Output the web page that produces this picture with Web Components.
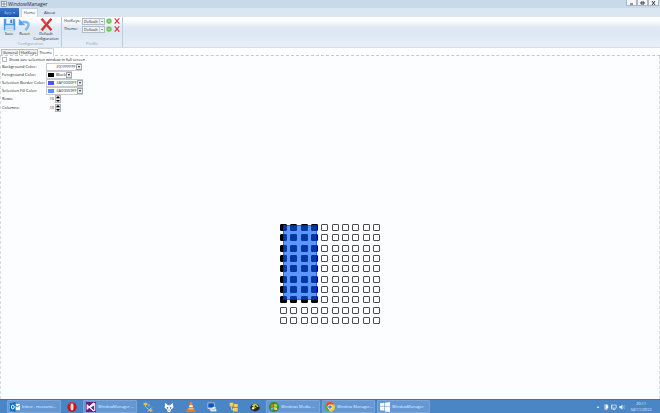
<!DOCTYPE html>
<html lang="en">
<head>
<meta charset="utf-8">
<title>WindowManager</title>
<style>
html,body{margin:0;height:100%}
body{font-family:"Open Sans","Noto Sans",sans-serif;font-size:4px;line-height:6px;color:#1c1c1c;overflow:hidden}
</style>
</head>
<body>
<window-manager></window-manager>
<script>
const define = (name, html, setup) => customElements.define(name, class extends HTMLElement {
  connectedCallback() {
    if (this.shadowRoot) return;
    const t = document.createElement('template');
    t.innerHTML = '<style>*{box-sizing:border-box}button,input,select{font:inherit;color:inherit;margin:0;padding:0;border:0;background:none;border-radius:0}svg{display:block}</style>' + html;
    this.attachShadow({mode: 'open'}).append(t.content.cloneNode(true));
    if (setup) setup(this, this.shadowRoot);
  }
});

const icons = {
  win: '<rect x="1" y="1" width="14" height="14" fill="#fff" stroke="#5c6f86" stroke-width="1.5"/><path d="M8 1v14M1 8h14" stroke="#5c6f86" stroke-width="2"/>',
  save: '<path d="M1 1h13l1 1v13H1z" fill="#4a9ae8"/><path d="M4 1h8v6H4z" fill="#e9f4ff"/><path d="M9 2h2v4H9z" fill="#3479c8"/><path d="M3 9h10v6H3z" fill="#dcecfb"/><path d="M4 11h8M4 13h8" stroke="#9bc1e7"/>',
  reset: '<path d="M4 5h4c7 0 6 5 1 10" fill="none" stroke="#7dbaf2" stroke-width="3"/><path d="M1 1v8h8z" fill="#5ba4ea"/>',
  cross: '<path d="M2 1l12 14M14 1L2 15" stroke="#d93030" stroke-width="3"/><path d="M3 2l5 5" stroke="#f27878" stroke-width="1"/>',
  plus: '<circle cx="8" cy="8" r="7" fill="#6cc455" stroke="#98d186"/><path d="M8 5v6M5 8h6" stroke="#b9eaa2" stroke-width="2"/>',
  outlook: '<path d="M7 3h9v10H7z" fill="#fff"/><path d="M7 4l5 4 4-4" fill="none" stroke="#1672bd" stroke-width="1.4"/><path d="M0 2l9-2v16l-9-2z" fill="#0872c6"/><ellipse cx="4.5" cy="8" rx="2.3" ry="3" fill="none" stroke="#fff" stroke-width="1.6"/>',
  opera: '<ellipse cx="8" cy="8" rx="7.5" ry="8" fill="#c01a1c"/><ellipse cx="8" cy="8" rx="2.4" ry="5.5" fill="#f6dede"/><path d="M3 4q3-4 8-2" stroke="#ef7770" fill="none"/>',
  vs: '<path d="M0 0h16v16H0z" fill="#68217a"/><path d="M2 5l3 3-3 3zM12 2l2 1v10l-2 1-6-5 6-4zM2 11l10-9M2 5l10 9" fill="none" stroke="#fff" stroke-width="1.7"/>',
  tools: '<path d="M4 3v5l8 6" fill="none" stroke="#d6b653" stroke-width="1.5"/><path d="M8 3h3v4H8z" fill="#74a9db"/><path d="M8 15l6-6" stroke="#dce8ee" stroke-width="1.5"/><path d="M1 1h6v4H1zM11 12h4v3h-4z" fill="#e5c04c"/>',
  foobar: '<path d="M2 1l4 4h4l4-4 1 8-4 3-1 4H6l-1-4-4-3z" fill="#fff"/><path d="M4 8l3 1-1 2zM12 8l-3 1 1 2z" fill="#202a35"/><path d="M7 13h2" stroke="#222"/>',
  vlc: '<path d="M7 0h2l4 13H3z" fill="#f38a1e"/><path d="M5.7 5h4.6l.8 3H4.9z" fill="#fff"/><path d="M2 11h12l2 5H0z" fill="#e67b16"/><path d="M4 11h8" stroke="#fff"/>',
  remote: '<path d="M1 1h11v10H1z" fill="#dbe7f6"/><path d="M2 2h9v7H2z" fill="#1450bd"/><path d="M4 12l5-3 6 2v4H6z" fill="#cfdceb"/><path d="M9 8h5v6H9z" fill="#e9f2fb"/><path d="M10 12l1 1 3-4" fill="none" stroke="#3d8a48"/>',
  folders: '<path d="M1 1h6v6H1zM8 3h6v5H8zM6 9h8v6H6z" fill="#f4c646"/><path d="M2 3h4M9 5h4M7 11h6" stroke="#fff1aa"/><path d="M4 7v5h2" stroke="#e6edf5" fill="none"/>',
  bug: '<ellipse cx="8" cy="9" rx="7.5" ry="6" fill="#242d28"/><path d="M3 6q5-7 11 1l-5 3z" fill="#dfc936"/><circle cx="5" cy="10" r="2" fill="#f5ef9a"/><path d="M8 6l5 5" stroke="#222" stroke-width="2"/>',
  media: '<circle cx="8" cy="8" r="8" fill="#368733"/><path d="M3 4l4-1v4l-4 1z" fill="#ec6b35"/><path d="M8 3l5 1v4l-5-1z" fill="#a7df5b"/><path d="M3 9l4-1v4l-4 1z" fill="#62b9ee"/><path d="M8 8l5 1v4l-5-1z" fill="#f6d847"/>',
  chrome: '<circle cx="8" cy="8" r="8" fill="#f5cd31"/><path d="M1 4a8 8 0 0 1 14 0H8L5 9z" fill="#dd4b39"/><path d="M1 4l5 8 2 4A8 8 0 0 1 1 4" fill="#3faa50"/><circle cx="8" cy="8" r="3.9" fill="#fff"/><circle cx="8" cy="8" r="2.9" fill="#4285d8"/>',
  panes: '<path d="M0 2l7-1v6H0zM8 1l8-1v7H8zM0 8h7v6l-7-1zM8 8h8v8l-8-1z" fill="#f7fbff"/>',
  up: '<path d="M4 10l4-4 4 4z" fill="#fff"/>',
  flag: '<path d="M3 1h9v14H3z" fill="#dbe7f4"/><path d="M7 4h7v7H7z" fill="#fff"/><path d="M5 1v14" stroke="#526b87" stroke-width="2"/>',
  net: '<path d="M2 3h12v8H2zM8 11v4M4 15h8" fill="none" stroke="#dce9f6" stroke-width="2"/><path d="M1 2v12" stroke="#fff" stroke-width="2"/>',
  sound: '<path d="M1 5h4l4-4v14l-4-4H1z" fill="#edf4fb"/><path d="M11 4q3 4 0 8M14 2q4 6 0 12" stroke="#c5d9ee" fill="none"/>'
};

define('wm-icon', '<style>:host{display:block;flex:none;width:var(--icon,12px);height:var(--icon,12px)}svg{width:100%;height:100%}</style><svg viewBox="0 0 16 16" aria-hidden="true"></svg>',
  (el, root) => root.querySelector('svg').innerHTML = icons[el.getAttribute('name')]);

define('title-bar', `<style>
:host{display:flex;align-items:center;height:8px;background:#c8d9ea;padding:0 1px;gap:1px;--icon:6px}
h1{font-size:5px;font-weight:400;line-height:8px;margin:0;flex:1;color:#26303b}
nav{display:flex;align-self:flex-start}
button{width:11px;height:6px;border:1px solid #aab6c3;border-top:0;background:#f5f6f7;display:grid;place-items:center}
svg{width:5px;height:4px;fill:none;stroke:#333}
</style><wm-icon name="win"></wm-icon><h1>WindowManager</h1><nav><button aria-label="Minimize"><svg viewBox="0 0 5 4"><path d="M1 3h3"/></svg></button><button aria-label="Restore"><svg viewBox="0 0 5 4"><path d="M1 1h3v2H1z"/></svg></button><button aria-label="Close"><svg viewBox="0 0 5 4"><path d="M1 0l3 4M4 0L1 4"/></svg></button></nav>`);

define('ribbon-tabs', `<style>
:host{display:flex;height:9px;background:#dbe6f3;line-height:9px;color:#26354a}
button{padding:0 6px}
.app{width:19px;padding:0;margin-right:2px;background:linear-gradient(#3f78ca,#1d55ad);color:#9fc0ee}
.on{background:#fafcff;border:1px solid #c2d2e5;border-bottom:0;padding:0 1px;line-height:8px;width:17px}
</style><button class="app">App ▾</button><button class="on">Home</button><button>About</button>`);

define('ribbon-group', `<style>
:host{display:flex;flex-direction:column;border-right:1px solid #bccbdd;padding:0 var(--pad,1px);height:30px}
div{display:flex;flex:1}footer{text-align:center;color:#8f9eb2;line-height:6px;height:6px}
</style><div><slot></slot></div><footer></footer>`, (el, root) => root.querySelector('footer').textContent = el.getAttribute('caption'));

define('tool-button', `<style>
:host{display:block;--icon:13px}
button{display:flex;flex-direction:column;align-items:center;line-height:5px;text-align:center;white-space:nowrap;padding-top:1px;width:100%}
</style><button><wm-icon name="save"></wm-icon><span><slot></slot></span></button>`, (el, root) => {
  const i = document.createElement('wm-icon'); i.setAttribute('name', el.getAttribute('icon'));
  root.querySelector('wm-icon').replaceWith(i);
});

define('profile-row', `<style>
:host{display:flex;align-items:center;gap:1px;height:8px;--icon:6px}
label{width:17px;white-space:nowrap}
.s{position:relative;width:23px;height:7px}
select{appearance:none;width:100%;height:7px;border:1px solid #b3bdca;background:#eef1f5;padding:0 1px;line-height:5px;display:block}
.s::after{content:"";position:absolute;right:2px;top:3px;border:1px solid transparent;border-top-color:#444}
.s::before{content:"";position:absolute;right:5px;top:1px;bottom:1px;border-left:1px solid #c5cdd8}
button+button{margin-left:1px}
</style><label for="p"></label><div class="s"><select id="p"><option>Default</option></select></div><button aria-label="Add"><wm-icon name="plus"></wm-icon></button><button aria-label="Delete"><wm-icon name="cross"></wm-icon></button>`,
  (el, root) => root.querySelector('label').textContent = el.getAttribute('label'));

define('app-ribbon', `<style>
:host{display:flex;height:31px;background:linear-gradient(#fff 0,#fff 3px,#e0eaf5 10px,#dce7f4 16px,#e8eff8 30px);border-bottom:1px solid #d2deec}
.save{width:16px}.reset{width:15px}.def{width:28px}
.profile{--pad:2px}
.rows{display:flex;flex-direction:column}
</style><ribbon-group caption="Configuration"><tool-button class="save" icon="save">Save</tool-button><tool-button class="reset" icon="reset">Reset</tool-button><tool-button class="def" icon="cross">Default<br>Configuration</tool-button></ribbon-group><ribbon-group class="profile" caption="Profile"><div class="rows"><profile-row label="HotKeys:"></profile-row><profile-row label="Theme:"></profile-row></div></ribbon-group>`);

define('page-tabs', `<style>
:host{display:flex;align-items:flex-end;height:8px;padding-left:1px;border-bottom:1px dashed #c6c8cc;background:#fff}
button{height:6px;line-height:5px;padding:0 1px;border:1px solid #b9bcc2;border-bottom:0;background:#eeeff1;white-space:nowrap}
button+button{border-left:0}
.on{height:8px;line-height:7px;background:#fff;margin-bottom:-1px;border-color:#d3d5d9}
</style><button>General</button><button>HotKeys</button><button class="on">Theme</button>`);

define('color-field', `<style>
:host{display:flex;align-items:center;height:8px}
label{width:44px;white-space:nowrap}
.s{position:relative;width:var(--w,37px);height:8px}
select{appearance:none;width:100%;height:8px;line-height:6px;padding-left:9px;border:1px solid #c6cbd3;background:#fff;display:block}
i{position:absolute;left:2px;top:2px;width:6px;height:4px;background:var(--c)}
b{position:absolute;right:0;top:1px;width:6px;height:6px;border:1px solid #a2a8b0;background:#eceef0;pointer-events:none}
b::after{content:"";position:absolute;left:1px;top:1px;border:1px solid transparent;border-top:2px solid #222;border-bottom:0}
</style><label for="c"></label><div class="s"><select id="c"><option></option></select><i></i><b></b></div>`, (el, root) => {
  root.querySelector('label').textContent = el.getAttribute('label');
  root.querySelector('option').textContent = el.getAttribute('value');
});

define('number-field', `<style>
:host{display:flex;align-items:center;height:8px}
label{width:45px}
input{width:7px;height:6px;text-align:right;line-height:6px}
span{display:flex;flex-direction:column;margin-left:1px}
button{width:6px;height:4px;background:#e9ebed;border:1px solid #b0b5bb;display:grid;place-items:center}
button+button{border-top:0}
svg{width:4px;height:2px}
</style><label for="n"></label><input id="n" value="10"><span><button aria-label="Increase"><svg viewBox="0 0 4 2"><path d="M0 2l2-2 2 2z"/></svg></button><button aria-label="Decrease"><svg viewBox="0 0 4 2"><path d="M0 0l2 2 2-2z"/></svg></button></span>`,
  (el, root) => root.querySelector('label').textContent = el.getAttribute('label'));

define('theme-form', `<style>
:host{display:flex;flex-direction:column;padding:0 1px}
.check{display:flex;align-items:center;gap:2px;height:7px}
input{appearance:none;width:5px;height:5px;border:1px solid #b9bec6;background:#fff}
.last{margin-top:1px}
</style><label class="check"><input type="checkbox">Show size selection window in full screen</label>
<color-field label="Background Color:" value="#01FFFFFF" style="--c:#fff;--w:36px"></color-field>
<color-field label="Foreground Color:" value="Black" style="--c:#000;--w:26px"></color-field>
<color-field label="Selection Border Color:" value="#AF0000FF" style="--c:#5050ff"></color-field>
<color-field label="Selection Fill Color:" value="#A00059FF" style="--c:#5c93ff"></color-field>
<number-field label="Rows:"></number-field><number-field class="last" label="Columns:"></number-field>`);

define('size-grid', `<style>
:host{display:grid;position:relative;grid-template-columns:repeat(10,7px);grid-template-rows:repeat(10,7px);justify-content:space-between;align-content:space-between;width:100px;height:100px}
i{border:1px solid #4c4c50;border-radius:1px;background:#fff}
i.on{background:#000;border-color:#000}
b{position:absolute;left:3px;top:1px;width:34px;height:75px;background:#0059ffa0;border:1px solid #0000ff60}
</style>`, (el, root) => {
  for (let n = 0; n < 100; n++) {
    const c = document.createElement('i');
    if (n % 10 < 4 && n < 80) c.className = 'on';
    root.append(c);
  }
  root.append(document.createElement('b'));
});

define('task-item', `<style>
:host{display:block;height:13px;--icon:10px}
button{width:100%;height:100%;display:flex;align-items:center;justify-content:center;overflow:hidden;white-space:nowrap;color:#e4eefa}
:host([open]) button{justify-content:flex-start;gap:2px;padding-left:2px;background:#6598d2;border:1px solid #78a6da;border-radius:1px}
</style><button><slot></slot></button>`, (el, root) => {
  const i = document.createElement('wm-icon'); i.setAttribute('name', el.getAttribute('icon'));
  root.querySelector('button').prepend(i);
  if (!el.textContent) root.querySelector('button').setAttribute('aria-label', el.getAttribute('icon'));
});

define('task-bar', `<style>
:host{display:flex;align-items:center;height:14px;background:#4a85c6;border-top:1px solid #3f73b0;padding-left:7px}
.w{width:54px}.i{width:22px}.n{width:53px;margin-left:2px}
.pins{display:grid;grid-template-columns:repeat(6,1fr);width:129px}
.tray{margin-left:auto;display:flex;align-items:center;gap:2px;padding-right:5px;color:#e9f2fc;--icon:6px}
time{display:block;text-align:center;line-height:6px;width:28px}
</style><task-item class="w" icon="outlook" open>Inbox - mezianto...</task-item><task-item class="i" icon="opera"></task-item><task-item class="w" icon="vs" open>WindowManager ...</task-item>
<div class="pins"><task-item icon="tools"></task-item><task-item icon="foobar"></task-item><task-item icon="vlc"></task-item><task-item icon="remote"></task-item><task-item icon="folders"></task-item><task-item icon="bug"></task-item></div>
<task-item class="w" icon="media" open>Windows Media ...</task-item><task-item class="n" icon="chrome" open>Window Manager...</task-item><task-item class="n" icon="panes" open>WindowManager</task-item>
<div class="tray"><wm-icon name="up"></wm-icon><wm-icon name="flag"></wm-icon><wm-icon name="net"></wm-icon><wm-icon name="sound"></wm-icon><time>20:11<br>04/11/2012</time></div>`);

define('window-manager', `<style>
:host{display:flex;flex-direction:column;height:100vh;background:#fcfdfe}
main{flex:1;display:flex;flex-direction:column}
.page{flex:1;display:flex;flex-direction:column;border:dashed #d9dce0;border-width:0 1px}
.stage{flex:1;display:grid;place-items:center;padding-top:37px}
</style><title-bar></title-bar><ribbon-tabs></ribbon-tabs><app-ribbon></app-ribbon><main><page-tabs></page-tabs><div class="page"><theme-form></theme-form><div class="stage"><size-grid></size-grid></div></div></main><task-bar></task-bar>`);
</script>
</body>
</html>
